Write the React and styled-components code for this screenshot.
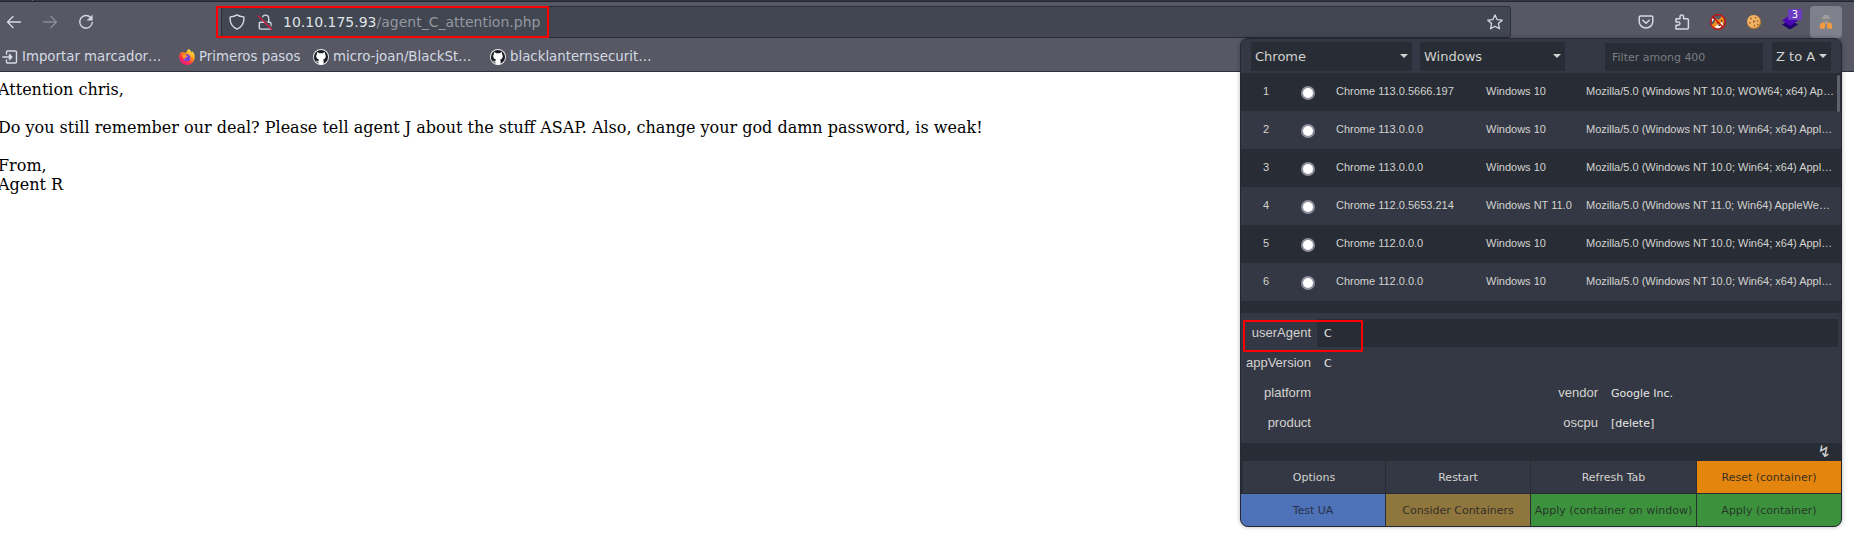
import React from "react";
import styled, { createGlobalStyle, css } from "styled-components";

const Global = createGlobalStyle`
  *, *::before, *::after { box-sizing: border-box; }
  html, body { margin: 0; padding: 0; background: #fff; overflow: hidden; }
`;

const sans = `"DejaVu Sans", sans-serif`;
const arial = `"Liberation Sans", Arial, sans-serif`;
const dark = "#272c35";
const slate = "#343844";
const ink = "#d3d3cf";

const Window = styled.div`
  position: relative;
  width: 1854px;
  height: 551px;
  overflow: hidden;
  background: #fff;
`;

const Chrome = styled.header`
  height: 72px;
  background: #575864;
  border-bottom: 1px solid #2e303b;
  font-family: ${sans};
  color: #d3dae3;
`;

const TabEdge = styled.div`
  height: 2px;
  background: #33353f;
  border-bottom: 1px solid #24262f;
  padding-left: 32px;
  &::before { content: ""; display: block; width: 1px; height: 1px; background: #666874; }
`;

const NavBar = styled.div`
  display: flex;
  align-items: center;
  height: 41px;
  padding: 4px 12px 5px 0;
`;

const NavIcons = styled.div`
  display: flex;
  gap: 20px;
  width: 221px;
  padding-left: 6px;
`;

const UrlBar = styled.div`
  display: flex;
  align-items: center;
  width: 1290px;
  height: 32px;
  padding: 0 7px 0 7px;
  border: 1px solid #2b2d38;
  border-radius: 3px;
  background: #414651;
`;

const Url = styled.div`
  flex: 1;
  padding-left: 10px;
  font-size: 14px;
  line-height: 18px;
  color: #9498a0;
  white-space: nowrap;
  b { font-weight: 400; color: #dfe3e8; }
`;

const Gap = styled.span`width: ${(p) => p.$w}px; flex: none;`;

const Extensions = styled.div`
  display: flex;
  gap: 4px;
  margin-left: auto;
`;

const ExtButton = styled.div`
  position: relative;
  display: flex;
  align-items: center;
  justify-content: center;
  width: 32px;
  height: 32px;
  border-radius: 4px;
  background: ${(p) => (p.$active ? "#7e818b" : "transparent")};
`;

const Badge = styled.span`
  position: absolute;
  right: 4px;
  top: 3px;
  width: 14px;
  height: 11px;
  border-radius: 1px;
  background: #6b3cc0;
  color: #fff;
  font-size: 10px;
  line-height: 11px;
  text-align: center;
`;

const Bookmarks = styled.div`
  display: flex;
  height: 28px;
  align-items: center;
  padding: 0 0 1px 2px;
`;

const Bookmark = styled.div`
  display: flex;
  align-items: center;
  gap: 4px;
  width: ${(p) => p.$w}px;
  font-size: 13.33px;
  line-height: 16px;
  white-space: nowrap;
  svg { flex: none; margin-top: 1px; }
`;

const Letter = styled.main`
  padding-top: 8px;
  margin-left: -2px;
  font: 16px/19px "DejaVu Serif", serif;
  color: #000;
  p { margin: 0 0 19px; }
`;

const Mark = styled.div`
  position: absolute;
  left: ${(p) => p.$x}px;
  top: ${(p) => p.$y}px;
  width: ${(p) => p.$w}px;
  height: ${(p) => p.$h}px;
  border: 2px solid #f00;
  border-radius: 1px;
`;

const Popup = styled.section`
  position: absolute;
  left: 1240px;
  top: 38px;
  width: 602px;
  height: 489px;
  display: flex;
  flex-direction: column;
  overflow: hidden;
  border: 1px solid #252832;
  border-radius: 8px;
  background: ${slate};
  box-shadow: 0 0 4px rgba(0, 0, 0, 0.3);
  color: ${ink};
  font-family: ${sans};
`;

const Filters = styled.div`
  display: flex;
  align-items: flex-end;
  height: 34px;
  padding: 0 10px 2px;
`;

const Select = styled.div`
  display: flex;
  align-items: center;
  justify-content: space-between;
  width: ${(p) => p.$w}px;
  height: 29px;
  margin-right: ${(p) => p.$mr || 0}px;
  padding: 0 4px;
  background: ${dark};
  font-size: 13px;
  white-space: nowrap;
  &::after {
    content: "";
    border: 4px solid transparent;
    border-top-color: ${ink};
    border-bottom: 0;
    margin-bottom: 1px;
  }
`;

const Search = styled.div`
  width: 158px;
  height: 28px;
  margin-right: 9px;
  padding-left: 7px;
  background: ${dark};
  color: #7b7e82;
  font-size: 11px;
  line-height: 29px;
`;

const List = styled.div`
  position: relative;
  height: 240px;
  background: ${dark};
  font-family: ${arial};
  font-size: 11px;
`;

const Thumb = styled.div`
  position: absolute;
  right: 1px;
  top: 2px;
  width: 3px;
  height: 37px;
  border-radius: 2px;
  background: #5d616c;
`;

const Row = styled.div`
  display: grid;
  grid-template-columns: 50px 45px 150px 100px 1fr;
  align-items: center;
  height: 38px;
  padding-bottom: 3px;
  white-space: nowrap;
  &:nth-child(even) { background: ${slate}; }
`;

const Num = styled.span`text-align: center;`;

const Radio = styled.span`
  justify-self: center;
  width: 14px;
  height: 14px;
  margin: 5px 0 0 -11px;
  border: 2px solid #8f8f9d;
  border-radius: 50%;
  background: #fff;
`;

const Fields = styled.div`
  height: 130px;
  padding: 5px 3px 0 0;
`;

const Field = styled.div`
  display: grid;
  grid-template-columns: 76px ${(p) => (p.$split ? "211px 76px 1fr" : "1fr")};
  align-items: center;
  height: 30px;
`;

const Label = styled.label`
  padding-right: 6px;
  font: 13px/16px ${arial};
  text-align: right;
`;

const Value = styled.div`
  height: 28px;
  padding: 1px 0 0 7px;
  background: ${(p) => (p.$focus ? dark : "transparent")};
  color: #e6e6e2;
  font-size: 11px;
  line-height: 28px;
`;

const Strip = styled.div`
  height: 18px;
  padding-right: 10px;
  background: ${dark};
  font-size: 16px;
  line-height: 17px;
  text-align: right;
`;

const Buttons = styled.div`
  flex: 1;
  display: grid;
  grid-template-columns: 144px 144px 165px 144px;
  grid-template-rows: 32px 32px;
  gap: 1px;
  background: ${dark};
`;

const tones = {
  plain: [slate, ink],
  orange: ["#e4860d", "#3b3020"],
  blue: ["#4d72b8", "#283149"],
  brown: ["#8f763c", "#33302b"],
  green: ["#3c923c", "#27382b"],
};

const Button = styled.div`
  display: flex;
  align-items: center;
  justify-content: center;
  font-size: 11px;
  white-space: nowrap;
  background: ${(p) => tones[p.$tone][0]};
  color: ${(p) => tones[p.$tone][1]};
  ${(p) => p.$inset && css`margin-left: 2px;`}
`;

const Line = ({ children, dim, sw = 1.4 }) => (
  <svg width="16" height="16" viewBox="0 0 16 16" fill="none" stroke="#d3dae3" strokeWidth={sw}
    strokeLinecap="round" strokeLinejoin="round" opacity={dim ? 0.4 : 1}>{children}</svg>
);

const Github = () => (
  <svg width="16" height="16" viewBox="0 0 16 16">
    <circle cx="8" cy="8" r="8" fill="#eef0f2" />
    <circle cx="8" cy="8" r="7.1" fill="#1b1d22" />
    <path fill="#fff" d="M4.2 3.2C5 3.2 5.8 3.8 6.2 4.2h3.6C10.4 3.8 11 3.2 11.9 3.2c.3.7.2 1.4.1 1.8 1.5 2 .8 5-1.9 5.4.4.5.5 1 .5 1.6v2.9a7 7 0 0 1-5.2 0v-1.6c-1.6.2-2-.6-2.6-1.5 1 0 1.2.9 2.6.6 0-.8.1-1.5.5-2C3.3 9.9 2.5 7 4 5c-.1-.4-.1-1.1.2-1.8z" />
  </svg>
);

const Firefox = () => (
  <svg width="16" height="16" viewBox="0 0 16 16">
    <defs>
      <linearGradient id="flame" x1=".85" y1=".05" x2=".2" y2=".95">
        <stop offset="0" stopColor="#fff44f" /><stop offset=".38" stopColor="#ff980e" />
        <stop offset=".7" stopColor="#ff3647" /><stop offset="1" stopColor="#e31587" />
      </linearGradient>
    </defs>
    <path fill="url(#flame)" d="M10 0c1.2 1 2 2 2.4 3.1.7.2 1-.3.9-.8 1.5 1.4 2.5 3.6 2.5 5.9a7.8 7.8 0 0 1-15.6 0c0-2 .7-3.9 2-5.2v1.3L4 2.2l.5 1.5c.8-.3 1.8-.1 2.5.2.8-2 1.6-3.2 3-3.9z" />
    <circle cx="7.9" cy="8.7" r="3.5" fill="#7542e5" />
    <path fill="#ff9a1f" d="M3.4 6.2c1.5-1.4 3-.7 3.8.4L9 7 7.3 8.3C5.8 8.5 5.5 9.5 6.7 10.2 5 10.3 3.4 8.7 3.4 6.2z" />
    <path fill="#ffbd4f" d="M8 4.5c3 0 4.3 2.6 3.4 5 2-2 1-5.4-1.1-6z" />
  </svg>
);

const rows = [
  ["Chrome 113.0.5666.197", "Windows 10", "Mozilla/5.0 (Windows NT 10.0; WOW64; x64) Ap…"],
  ["Chrome 113.0.0.0", "Windows 10", "Mozilla/5.0 (Windows NT 10.0; Win64; x64) Appl…"],
  ["Chrome 113.0.0.0", "Windows 10", "Mozilla/5.0 (Windows NT 10.0; Win64; x64) Appl…"],
  ["Chrome 112.0.5653.214", "Windows NT 11.0", "Mozilla/5.0 (Windows NT 11.0; Win64) AppleWe…"],
  ["Chrome 112.0.0.0", "Windows 10", "Mozilla/5.0 (Windows NT 10.0; Win64; x64) Appl…"],
  ["Chrome 112.0.0.0", "Windows 10", "Mozilla/5.0 (Windows NT 10.0; Win64; x64) Appl…"],
];

export default function App() {
  return (
    <Window>
      <Global />
      <Chrome>
        <TabEdge />
        <NavBar>
          <NavIcons>
            <Line><path d="M14.5 8H1.5M7 2.500 1.500 8 7 13.500" /></Line>
            <Line dim><path d="M1.5 8h13M9 2.500 14.500 8 9 13.500" /></Line>
            <Line><path d="M12.6 3.500A6.300 6.300 0 1 0 14.300 8.500" /><path d="M14.300 1.500v4.700H9.600z" fill="#d3dae3" strokeWidth=".6" /></Line>
          </NavIcons>
          <UrlBar>
            <Line><path d="M8 .9C6.2 2.200 3.800 2.700 1.200 2.900.600 8.200 3.200 13 8 15.200 12.800 13 15.400 8.200 14.800 2.900 12.200 2.700 9.800 2.200 8 .900z" /></Line>
            <Gap $w={12} />
            <Line>
              <path d="M5.300 5V4.300a3.200 3.200 0 0 1 6.400 0V8M3.300 8.200h9.600a1 1 0 0 1 1 1v4.900a1 1 0 0 1-1 1H3.300a1 1 0 0 1-1-1V9.200a1 1 0 0 1 1-1z" />
              <path d="M2 1.300 15.300 14.600" stroke="#414651" strokeWidth="2" />
              <path d="M1.200 1.900 14.600 15.300" stroke="#e8204c" strokeWidth="1.300" />
            </Line>
            <Url><b>10.10.175.93</b>/agent_C_attention.php</Url>
            <Line sw={1.3}><path d="m8 .9 2.1 4.700 5.100.600-3.800 3.400 1.100 5.200L8 12.200l-4.500 2.600 1.100-5.200L.8 6.200l5.100-.600z" /></Line>
          </UrlBar>
          <Extensions>
            <ExtButton><Line sw={1.5}><path d="M2.5 2h11a1.300 1.300 0 0 1 1.300 1.300v4.200a6.800 6.500 0 0 1-13.600 0V3.300A1.300 1.300 0 0 1 2.500 2zM4.800 6.300 8 9.300l3.200-3" /></Line></ExtButton>
            <ExtButton><Line sw={1.5}><path d="M2 14.900V11.200h2.300a1.600 1.600 0 0 0 0-3.300H2V4.800h4V2.700a1.800 1.800 0 0 1 3.600 0v2.100h3.600a1.200 1.200 0 0 1 1.200 1.200v7.700a1.200 1.200 0 0 1-1.200 1.200z" /></Line></ExtButton>
            <ExtButton>
              <svg width="16" height="16" viewBox="0 0 16 16">
                <path fill="#f28c1c" d="M6 4.500 8.500 6 12.500 1.500l1.800 4.800-.9 5L9 14.500l-6.500-.6L1 11l3-2z" />
                <path fill="#fff" d="M1 4l3 1-2 3zM5 12l4-1.500 3-3 1 3.500-4 3.300-3-.4z" />
                <path fill="#33302e" d="M7 8h1.500v1.500H7zM11 6h1.400v1.400H11zM8.500 10.500h2V12h-2z" />
                <circle cx="8" cy="8" r="7.3" fill="none" stroke="#cf0a0a" strokeWidth="1.2" />
                <path d="M2.800 2.800 13.200 13.200" stroke="#cf0a0a" strokeWidth="1.3" />
              </svg>
            </ExtButton>
            <ExtButton>
              <svg width="16" height="16" viewBox="0 0 16 16">
                <circle cx="8" cy="8" r="7.1" fill="#c57a29" />
                <circle cx="7.6" cy="7.4" r="6.4" fill="#efb264" />
                <g fill="#7d4c22"><circle cx="5" cy="4.500" r=".8" /><circle cx="9.500" cy="3.800" r=".7" /><circle cx="8" cy="7.500" r=".9" /><circle cx="4" cy="9" r=".8" /><circle cx="11.500" cy="7" r=".8" /><circle cx="8.500" cy="11.500" r=".8" /><circle cx="11.800" cy="10.500" r=".7" /></g>
              </svg>
            </ExtButton>
            <ExtButton>
              <svg width="16" height="16" viewBox="0 0 16 16">
                <path fill="#21006f" d="m0 10.500 8-4 8 4-8 5z" />
                <path fill="#4a08b5" d="m0 6.500 8-5.500 8 5.500-8 5.500z" />
              </svg>
              <Badge>3</Badge>
            </ExtButton>
            <ExtButton $active>
              <svg width="14" height="16" viewBox="0 0 14 16">
                <path fill="#a09f9b" d="M4.600 1h4.800l.8 2.500h1.500v1.200H2.300V3.500h1.500z" />
                <path fill="#8b8a88" d="M3.500 5.400h7v1.300L9.200 7.900H4.800L3.500 6.700z" />
                <path fill="#f29a42" d="M1.500 9.500 4.300 8 6.300 10.500V12l-1 2.800H.8V12z M12.500 9.500 9.700 8 7.700 10.500V12l1 2.800h4.500V12z" />
                <path fill="#d9b08a" d="M5.300 8.200h3.400L7 10.300z" />
              </svg>
            </ExtButton>
          </Extensions>
        </NavBar>
        <Bookmarks>
          <Bookmark $w={177}>
            <Line><path d="M4.5 5V3a1 1 0 0 1 1-1h8a1 1 0 0 1 1 1v10a1 1 0 0 1-1 1h-8a1 1 0 0 1-1-1v-2M.900 8H9M7.500 5.500 10 8l-2.500 2.500z" /></Line>
            Importar marcador…
          </Bookmark>
          <Bookmark $w={134}><Firefox />Primeros pasos</Bookmark>
          <Bookmark $w={177}><Github />micro-joan/BlackSt…</Bookmark>
          <Bookmark $w={177}><Github />blacklanternsecurit…</Bookmark>
        </Bookmarks>
      </Chrome>

      <Letter>
        <p>Attention chris,</p>
        <p>Do you still remember our deal? Please tell agent J about the stuff ASAP. Also, change your god damn password, is weak!</p>
        <p>From,<br />Agent R</p>
      </Letter>

      <Popup>
        <Filters>
          <Select $w={161} $mr={8}>Chrome</Select>
          <Select $w={145} $mr={40}>Windows</Select>
          <Search>Filter among 400</Search>
          <Select $w={59}>Z to A</Select>
        </Filters>
        <List>
          {rows.map(([browser, os, ua], i) => (
            <Row key={i}>
              <Num>{i + 1}</Num>
              <Radio />
              <span>{browser}</span>
              <span>{os}</span>
              <span>{ua}</span>
            </Row>
          ))}
          <Thumb />
        </List>
        <Fields>
          <Field><Label>userAgent</Label><Value $focus>C</Value></Field>
          <Field><Label>appVersion</Label><Value>C</Value></Field>
          <Field $split><Label>platform</Label><Value /><Label>vendor</Label><Value>Google Inc.</Value></Field>
          <Field $split><Label>product</Label><Value /><Label>oscpu</Label><Value>[delete]</Value></Field>
        </Fields>
        <Strip>↯</Strip>
        <Buttons>
          <Button $tone="plain" $inset>Options</Button>
          <Button $tone="plain">Restart</Button>
          <Button $tone="plain">Refresh Tab</Button>
          <Button $tone="orange">Reset (container)</Button>
          <Button $tone="blue">Test UA</Button>
          <Button $tone="brown">Consider Containers</Button>
          <Button $tone="green">Apply (container on window)</Button>
          <Button $tone="green">Apply (container)</Button>
        </Buttons>
      </Popup>

      <Mark $x={216} $y={6} $w={333} $h={32} />
      <Mark $x={1243} $y={320} $w={120} $h={32} />
    </Window>
  );
}
